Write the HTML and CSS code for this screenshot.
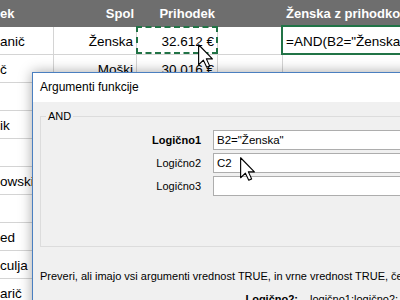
FILE: index.html
```html
<!DOCTYPE html>
<html lang="sl">
<head>
  <meta charset="UTF-8" />
  <title>Argumenti funkcije</title>
  <link rel="stylesheet" href="styles.css">
</head>
<body>
  <div class="sheet">
    <div class="row head">
      <div class="cell">ek</div>
      <div class="cell num">Spol</div>
      <div class="cell num">Prihodek</div>
      <div class="cell"></div>
      <div class="cell">Ženska z prihodkom nad 30.000 €</div>
    </div>
    <div class="row">
      <div class="cell name">anič</div>
      <div class="cell num">Ženska</div>
      <div class="cell num copied">32.612 €</div>
      <div class="cell"></div>
      <div class="cell active">=AND(B2="Ženska";C2&gt;30000)</div>
    </div>
    <div class="row">
      <div class="cell name">č</div>
      <div class="cell num">Moški</div>
      <div class="cell num">30.016 €</div>
      <div class="cell"></div>
      <div class="cell"></div>
    </div>
    <div class="row">
      <div class="cell name"></div>
      <div class="cell num">Ženska</div>
      <div class="cell num">28.450 €</div>
      <div class="cell"></div>
      <div class="cell"></div>
    </div>
    <div class="row">
      <div class="cell name">ik</div>
      <div class="cell num">Moški</div>
      <div class="cell num">41.300 €</div>
      <div class="cell"></div>
      <div class="cell"></div>
    </div>
    <div class="row">
      <div class="cell name"></div>
      <div class="cell num">Ženska</div>
      <div class="cell num">35.120 €</div>
      <div class="cell"></div>
      <div class="cell"></div>
    </div>
    <div class="row">
      <div class="cell name">owski</div>
      <div class="cell num">Moški</div>
      <div class="cell num">26.980 €</div>
      <div class="cell"></div>
      <div class="cell"></div>
    </div>
    <div class="row">
      <div class="cell name"></div>
      <div class="cell num">Ženska</div>
      <div class="cell num">31.744 €</div>
      <div class="cell"></div>
      <div class="cell"></div>
    </div>
    <div class="row">
      <div class="cell name">ed</div>
      <div class="cell num">Moški</div>
      <div class="cell num">29.015 €</div>
      <div class="cell"></div>
      <div class="cell"></div>
    </div>
    <div class="row">
      <div class="cell name">culja</div>
      <div class="cell num">Ženska</div>
      <div class="cell num">33.870 €</div>
      <div class="cell"></div>
      <div class="cell"></div>
    </div>
    <div class="row">
      <div class="cell name">arič</div>
      <div class="cell num">Moški</div>
      <div class="cell num">38.260 €</div>
      <div class="cell"></div>
      <div class="cell"></div>
    </div>
  </div>

  <!-- Function arguments dialog -->
  <div class="dialog">
    <div class="dialog-title">Argumenti funkcije</div>
    <div class="dialog-body">
      <fieldset class="group">
        <legend>AND</legend>
        <div class="args">
          <label class="arg-label current">Logično1</label>
          <input class="arg-input" type="text" value="B2=&quot;Ženska&quot;" readonly>
          <label class="arg-label">Logično2</label>
          <input class="arg-input" type="text" value="C2" readonly>
          <label class="arg-label">Logično3</label>
          <input class="arg-input" type="text" value="" readonly>
        </div>
      </fieldset>
      <p class="desc">Preveri, ali imajo vsi argumenti vrednost TRUE, in vrne vrednost TRUE, če imajo vsi argumenti vrednost TRUE.</p>
      <div class="arg-help">
        <span class="help-label">Logično2:</span>
        <span class="help-text">logično1;logično2;... je od 1 do 255 pogojev, ki jih želite preskusiti</span>
      </div>
    </div>
  </div>

  <svg class="cursor cursor-sheet" viewBox="0 0 12 19" width="15" height="24">
    <path d="M0.5 0.5 L0.5 16.5 L4.3 12.8 L7 18.5 L9.3 17.4 L6.7 11.8 L11.5 11.8 Z" fill="#fff" stroke="#000" stroke-width="0.9" stroke-linejoin="round"/>
  </svg>
  <svg class="cursor cursor-dialog" viewBox="0 0 12 19" width="15" height="24">
    <path d="M0.5 0.5 L0.5 16.5 L4.3 12.8 L7 18.5 L9.3 17.4 L6.7 11.8 L11.5 11.8 Z" fill="#fff" stroke="#000" stroke-width="0.9" stroke-linejoin="round"/>
  </svg>
</body>
</html>
```

FILE: styles.css
```css
/* Spreadsheet behind the dialog */
body {
  margin: 0;
  width: 400px;
  height: 300px;
  overflow: hidden;
  position: relative;
  background-color: #ffffff;
  font-family: "Liberation Sans", Arial, sans-serif;
}

.sheet {
  width: 430px;
}

.row {
  display: grid;
  grid-template-columns: 54px 83px 81px 65px 147px;
  height: 28px;
  font-size: 13.5px;
  line-height: 16px;
  color: #000;
}

.cell {
  position: relative;
  display: flex;
  align-items: flex-end;
  padding: 0 3px 4px 3px;
  border-right: 1px solid #d4d4d4;
  border-bottom: 1px solid #d4d4d4;
  white-space: nowrap;
  overflow: visible;
  box-sizing: border-box;
}

.cell.num {
  justify-content: flex-end;
}

.cell.name {
  padding-left: 0;
  overflow: hidden;
}

.row.head {
  height: 27px;
  background-color: #6e6e6e;
  color: #ffffff;
  font-size: 13px;
  font-weight: bold;
}

.row.head .cell {
  align-items: center;
  padding-bottom: 0;
  border: none;
}

.row.head .cell:first-child {
  padding-left: 0;
}

/* marching ants around the copied cell */
.cell.copied::after {
  content: "";
  position: absolute;
  top: -1px;
  left: -1px;
  right: -1px;
  bottom: 0;
  border: 2px dashed #217346;
}

/* active cell in edit mode */
.cell.active::after {
  content: "";
  position: absolute;
  top: -2px;
  left: -2px;
  right: -2px;
  bottom: -1px;
  border: 2px solid #217346;
}

/* Function arguments dialog */
.dialog {
  position: absolute;
  left: 32px;
  top: 72px;
  width: 420px;
  height: 240px;
  border: 1px solid #4a7fc0;
  background-color: #f0f0f0;
  box-shadow: 0 0 12px rgba(0, 0, 0, 0.35);
  overflow: hidden;
  font-family: "Liberation Sans", Arial, sans-serif;
  font-size: 11px;
  color: #000;
}

.dialog-title {
  height: 29px;
  line-height: 29px;
  padding-left: 7px;
  background-color: #ffffff;
  font-size: 12px;
}

.dialog-body {
  padding: 0 0 0 7px;
}

.group {
  margin: 6px 0 0 0;
  padding: 6px 0 50px 5px;
  border: 1px solid #dcdcdc;
  border-right: none;
  min-width: 0;
}

.group legend {
  padding: 0 2px;
  line-height: 16px;
  font-size: 11px;
}

.args {
  display: grid;
  grid-template-columns: 155px 1fr;
  column-gap: 12px;
  row-gap: 3px;
}

.arg-label {
  text-align: right;
  line-height: 20px;
}

.arg-label.current {
  font-weight: bold;
}

.arg-input {
  height: 20px;
  box-sizing: border-box;
  margin: 0;
  padding: 0 3px;
  border: 1px solid #adadad;
  background-color: #ffffff;
  font-family: "Liberation Sans", Arial, sans-serif;
  font-size: 11.5px;
  color: #000;
  outline: none;
}

.desc {
  margin: 21px 0 0 0;
  line-height: 16px;
  white-space: nowrap;
}

.arg-help {
  display: grid;
  grid-template-columns: 258px 1fr;
  column-gap: 12px;
  margin-top: 7px;
  line-height: 16px;
  white-space: nowrap;
}

.help-label {
  text-align: right;
  font-weight: bold;
}

/* mouse pointers */
.cursor {
  position: absolute;
  z-index: 5;
}

.cursor-sheet {
  left: 198px;
  top: 44px;
}

.cursor-dialog {
  left: 240px;
  top: 157px;
}
```
